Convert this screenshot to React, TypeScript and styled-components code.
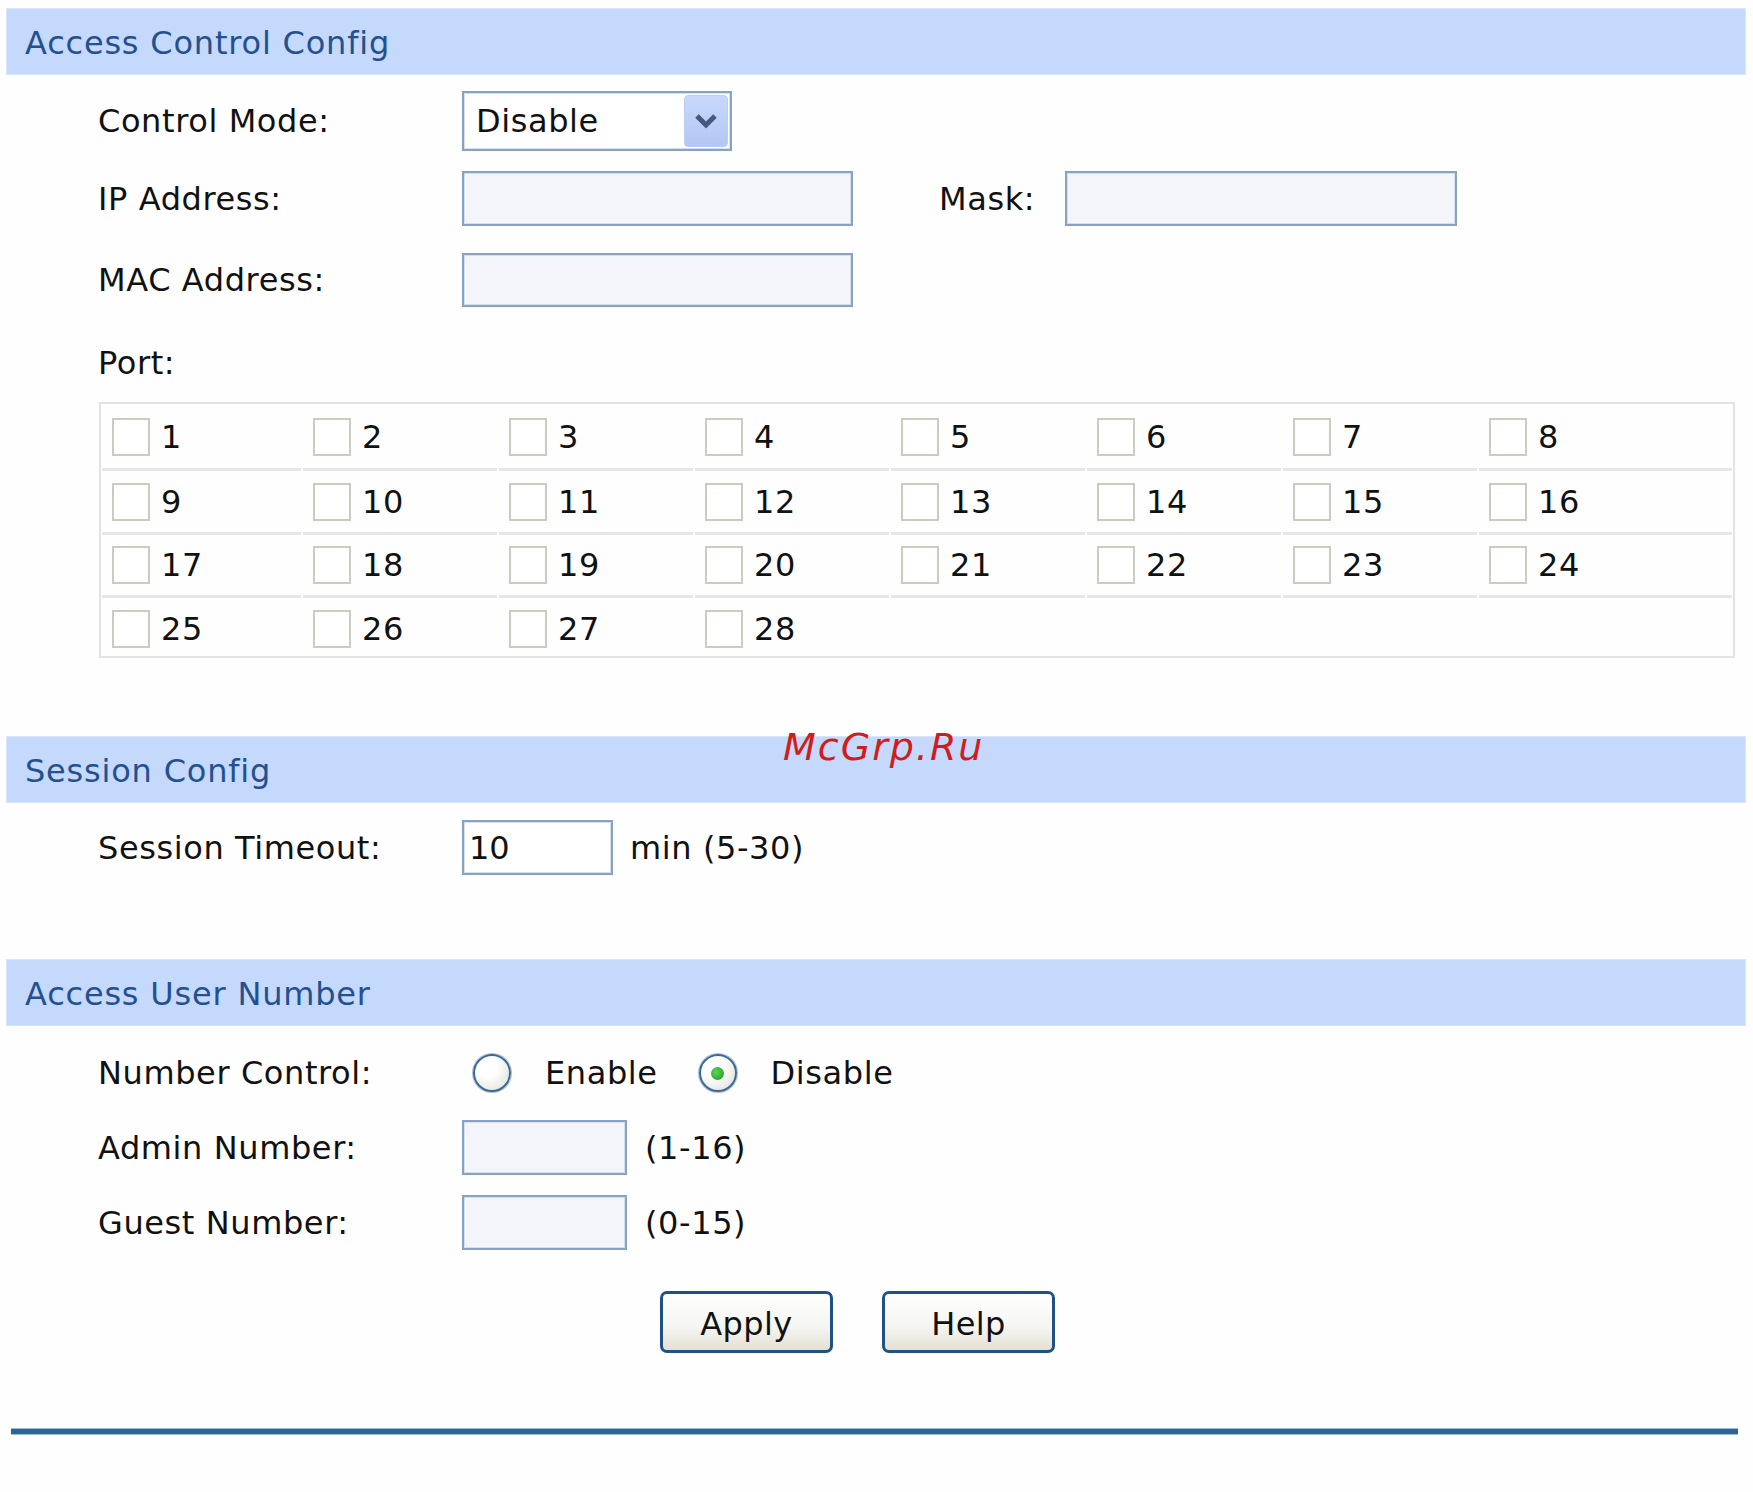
import React from 'react';
import styled, { createGlobalStyle } from 'styled-components';

const GlobalStyle = createGlobalStyle`
  html, body {
    margin: 0;
    padding: 0;
    background: #fefefe;
  }
  body {
    font-family: "DejaVu Sans", "Liberation Sans", sans-serif;
    color: #111;
  }
`;

const Page = styled.div`
  position: relative;
  width: 1753px;
  min-height: 1492px;
  box-sizing: border-box;
  padding: 8px 7px 0 6px;
`;

const SectionHeader = styled.div<{ $mt?: number }>`
  height: 67px;
  margin-top: ${p => p.$mt || 0}px;
  background: #c5d9fd;
  border: 1px solid #d8e5fd;
  box-sizing: border-box;
  display: flex;
  align-items: center;
  padding: 2px 0 0 18px;
  font-size: 32px;
  letter-spacing: 0.8px;
  color: #24508f;
`;

const Body = styled.div`
  padding-left: 92px;
`;

const Row = styled.div<{ $mt: number; $h: number }>`
  display: flex;
  align-items: center;
  margin-top: ${p => p.$mt}px;
  height: ${p => p.$h}px;
  font-size: 32px;
  letter-spacing: 0.6px;
`;

const Label = styled.div`
  width: 364px;
  flex-shrink: 0;
`;

const SubLabel = styled.div`
  width: 126px;
  margin-left: 86px;
`;

const TextBox = styled.input<{ $w: number; $white?: boolean }>`
  width: ${p => p.$w}px;
  height: 100%;
  box-sizing: border-box;
  border: 2px solid #86a3c3;
  box-shadow: inset 0 0 0 1px #d7e0ea;
  background: ${p => (p.$white ? '#ffffff' : '#f4f5fa')};
  font-family: inherit;
  font-size: 32px;
  color: #111;
  padding: 0 5px;
  margin: 0;
  outline: none;
`;

const Hint = styled.span<{ $ml: number }>`
  margin-left: ${p => p.$ml}px;
`;

const Select = styled.div`
  width: 270px;
  height: 100%;
  box-sizing: border-box;
  border: 2px solid #86a3c3;
  box-shadow: inset 0 0 0 1px #d7e0ea;
  background: #fff;
  display: flex;
  align-items: center;
  justify-content: space-between;
  padding: 0 2px 0 12px;
`;

const DropButton = styled.div`
  width: 44px;
  height: 52px;
  border-radius: 4px;
  background: linear-gradient(#c8d8fb, #b3c7f4);
  border: 1px solid #bccdf2;
  box-sizing: border-box;
  display: flex;
  align-items: center;
  justify-content: center;
`;

const PortGrid = styled.div`
  margin: 16px 11px 0 1px;
  height: 256px;
  box-sizing: border-box;
  border: 2px solid #e3e3e3;
  padding: 1px 1px 0 1px;
  display: grid;
  grid-template-columns: 199px repeat(6, 194px) 1fr;
  grid-template-rows: 66px 64px 63px 61px;
  column-gap: 2px;
`;

const PortCell = styled.div<{ $last: boolean }>`
  display: flex;
  align-items: center;
  padding-left: 10px;
  border-bottom: ${p => (p.$last ? 'none' : '3px solid #e6e6e6')};
  font-size: 32px;
  letter-spacing: 0.6px;
`;

const CheckBox = styled.span`
  width: 38px;
  height: 38px;
  box-sizing: border-box;
  border: 2px solid #cdcbbd;
  background: #fff;
  margin-right: 11px;
  flex-shrink: 0;
`;

const Radio = styled.span<{ $checked?: boolean; $ml: number }>`
  position: relative;
  width: 38px;
  height: 38px;
  margin-left: ${p => p.$ml}px;
  margin-right: 34px;
  box-sizing: border-box;
  border-radius: 50%;
  border: 2px solid #3d6995;
  box-shadow: 0 0 0 1px #a9c0d8;
  background: radial-gradient(circle at 35% 35%, #ffffff 30%, #dcdcd4 100%);
  flex-shrink: 0;
  &::after {
    content: '';
    display: ${p => (p.$checked ? 'block' : 'none')};
    position: absolute;
    left: 50%;
    top: 50%;
    width: 13px;
    height: 13px;
    margin: -6.5px 0 0 -6.5px;
    border-radius: 50%;
    background: radial-gradient(circle at 40% 40%, #5fd35f, #119a11);
  }
`;

const ButtonBar = styled.div`
  display: flex;
  gap: 49px;
  margin-top: 41px;
  padding-left: 654px;
`;

const Button = styled.button`
  width: 173px;
  height: 62px;
  box-sizing: border-box;
  border: 3px solid #1f5283;
  border-radius: 7px;
  background: linear-gradient(#ffffff 0%, #f4f4f1 60%, #e4e1d2 100%);
  font-family: inherit;
  font-size: 32px;
  letter-spacing: 0.4px;
  color: #111;
  padding: 4px 0 0 0;
`;

const BottomRule = styled.div`
  margin: 75px 8px 0 5px;
  height: 7px;
  background: #2c6493;
  border-top: 1px solid #9cbbd6;
  border-bottom: 1px solid #9cbbd6;
  box-sizing: border-box;
`;

const Watermark = styled.div`
  position: absolute;
  left: 783px;
  top: 725px;
  font-family: "DejaVu Sans", sans-serif;
  font-style: italic;
  font-size: 38px;
  letter-spacing: 2px;
  color: #d11c1c;
`;

const ports = Array.from({ length: 28 }, (_, i) => i + 1);

const App = () => (
  <>
    <GlobalStyle />
    <Page>
      <SectionHeader>Access Control Config</SectionHeader>
      <Body>
        <Row $mt={16} $h={60}>
          <Label>Control Mode:</Label>
          <Select>
            <span>Disable</span>
            <DropButton>
              <svg width="24" height="16" viewBox="0 0 24 16">
                <path d="M3 3 L12 12 L21 3" fill="none" stroke="#44597e" strokeWidth="5" />
              </svg>
            </DropButton>
          </Select>
        </Row>
        <Row $mt={20} $h={55}>
          <Label>IP Address:</Label>
          <TextBox $w={391} readOnly />
          <SubLabel>Mask:</SubLabel>
          <TextBox $w={392} readOnly />
        </Row>
        <Row $mt={27} $h={54}>
          <Label>MAC Address:</Label>
          <TextBox $w={391} readOnly />
        </Row>
        <Row $mt={33} $h={46}>
          <Label>Port:</Label>
        </Row>
        <PortGrid>
          {ports.map(n => (
            <PortCell key={n} $last={n > 24}>
              <CheckBox />
              {n}
            </PortCell>
          ))}
        </PortGrid>
      </Body>

      <SectionHeader $mt={78}>Session Config</SectionHeader>
      <Body>
        <Row $mt={17} $h={55}>
          <Label>Session Timeout:</Label>
          <TextBox $w={151} $white readOnly value="10" />
          <Hint $ml={17}>min (5-30)</Hint>
        </Row>
      </Body>

      <SectionHeader $mt={84}>Access User Number</SectionHeader>
      <Body>
        <Row $mt={22} $h={50}>
          <Label>Number Control:</Label>
          <Radio $ml={11} />
          <span>Enable</span>
          <Radio $ml={41} $checked />
          <span>Disable</span>
        </Row>
        <Row $mt={22} $h={55}>
          <Label>Admin Number:</Label>
          <TextBox $w={165} readOnly />
          <Hint $ml={18}>(1-16)</Hint>
        </Row>
        <Row $mt={20} $h={55}>
          <Label>Guest Number:</Label>
          <TextBox $w={165} readOnly />
          <Hint $ml={18}>(0-15)</Hint>
        </Row>
      </Body>
      <ButtonBar>
        <Button>Apply</Button>
        <Button>Help</Button>
      </ButtonBar>
      <BottomRule />
      <Watermark>McGrp.Ru</Watermark>
    </Page>
  </>
);

export default App;
